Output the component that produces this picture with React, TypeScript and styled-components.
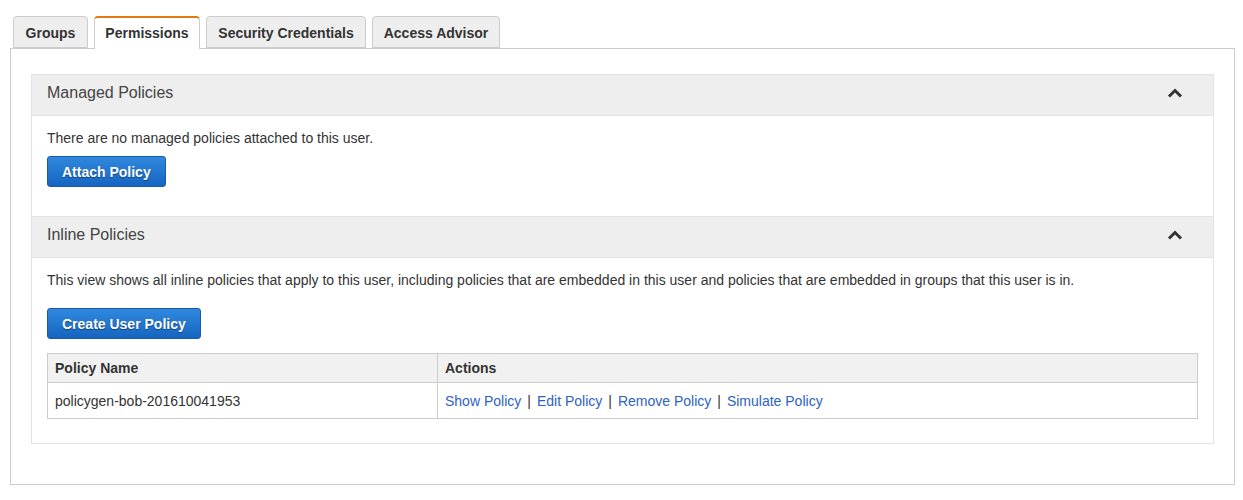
import React from "react";
import styled, { createGlobalStyle } from "styled-components";

const Global = createGlobalStyle`
  html, body { margin: 0; padding: 0; background: #fff; }
  body { font-family: "Liberation Sans", Arial, Helvetica, sans-serif; color: #333; font-size: 14px; }
`;

const Page = styled.div`
  padding: 16px 9px 0 10px;
  width: 1225px;
`;

const TabBar = styled.div`
  display: flex;
  gap: 6px;
  padding-left: 3px;
  position: relative;
  z-index: 1;
`;

const Tab = styled.div<{ $active?: boolean; $w: number }>`
  box-sizing: border-box;
  width: ${(p) => p.$w}px;
  height: ${(p) => (p.$active ? "33px" : "32px")};
  margin-bottom: ${(p) => (p.$active ? "-1px" : "0")};
  display: flex;
  align-items: center;
  justify-content: center;
  font-weight: bold;
  font-size: 14px;
  color: #333;
  background: ${(p) => (p.$active ? "#fff" : "#eeeeee")};
  border: 1px solid #cccccc;
  border-bottom: ${(p) => (p.$active ? "none" : "1px solid #cccccc")};
  border-top: ${(p) => (p.$active ? "2px solid #e47911" : "1px solid #cccccc")};
  border-radius: 4px 4px 0 0;
  padding-top: 1px;
  padding-bottom: ${(p) => (p.$active ? "3px" : "0")};
`;

const Panel = styled.div`
  box-sizing: border-box;
  border: 1px solid #cccccc;
  padding: 25px 20px 40px 20px;
  height: 437px;
`;

const Box = styled.div`
  border: 1px solid #e3e3e3;
`;

const SectionHeader = styled.div<{ $first?: boolean }>`
  box-sizing: border-box;
  height: ${(p) => (p.$first ? "41px" : "42px")};
  background: #eeeeee;
  border-bottom: 1px solid #e3e3e3;
  border-top: ${(p) => (p.$first ? "none" : "1px solid #e3e3e3")};
  display: flex;
  align-items: center;
  justify-content: space-between;
  padding: 0 30px 4px 15px;
  font-size: 16px;
  color: #444;
`;

const SectionBody = styled.div<{ $top: number; $bottom: number }>`
  padding: ${(p) => p.$top}px 15px ${(p) => p.$bottom}px 15px;
`;

const Text = styled.p`
  margin: 0;
  line-height: 20px;
  font-size: 14px;
  color: #333;
`;

const Button = styled.button<{ $top: number }>`
  box-sizing: border-box;
  margin-top: ${(p) => p.$top}px;
  height: 31px;
  padding: 0 14px;
  border: 1px solid #1a5aa8;
  border-radius: 3px;
  background: linear-gradient(#3089de, #1565c0);
  color: #fff;
  font-family: "Liberation Sans", Arial, sans-serif;
  font-weight: bold;
  font-size: 14px;
  text-shadow: 0 1px 1px rgba(0, 0, 0, 0.45);
  display: block;
  cursor: pointer;
`;

const Table = styled.table`
  margin-top: 14px;
  width: 100%;
  border-collapse: collapse;
  border: 1px solid #cccccc;
`;

const Th = styled.th<{ $w?: number }>`
  text-align: left;
  height: 29px;
  padding: 0 7px;
  background: #f1f1f1;
  border: 1px solid #cccccc;
  font-size: 14px;
  color: #333;
  width: ${(p) => (p.$w ? `${p.$w}px` : "auto")};
  box-sizing: border-box;
`;

const Td = styled.td`
  height: 35px;
  padding: 0 7px;
  border: 1px solid #cccccc;
  font-size: 14px;
  color: #333;
`;

const ActionLink = styled.a`
  color: #2d63c0;
  text-decoration: none;
  cursor: pointer;
`;

const Sep = styled.span`
  color: #333;
  margin: 0 6px;
`;

const Chevron = () => (
  <svg width="16" height="12" viewBox="0 0 16 12">
    <path d="M2 9.5 L8 3.5 L14 9.5" fill="none" stroke="#333" strokeWidth="3" strokeLinejoin="miter" />
  </svg>
);

export default function App() {
  const actions = ["Show Policy", "Edit Policy", "Remove Policy", "Simulate Policy"];
  return (
    <>
      <Global />
      <Page>
        <TabBar>
          <Tab $w={75}>Groups</Tab>
          <Tab $w={106} $active>Permissions</Tab>
          <Tab $w={160}>Security Credentials</Tab>
          <Tab $w={128}>Access Advisor</Tab>
        </TabBar>
        <Panel>
          <Box>
            <SectionHeader $first>
              <span>Managed Policies</span>
              <Chevron />
            </SectionHeader>
            <SectionBody $top={12} $bottom={29}>
              <Text>There are no managed policies attached to this user.</Text>
              <Button $top={8}>Attach Policy</Button>
            </SectionBody>
            <SectionHeader>
              <span>Inline Policies</span>
              <Chevron />
            </SectionHeader>
            <SectionBody $top={12} $bottom={24}>
              <Text>
                This view shows all inline policies that apply to this user, including policies that are embedded in this user and policies that are embedded in groups that this user is in.
              </Text>
              <Button $top={18}>Create User Policy</Button>
              <Table>
                <thead>
                  <tr>
                    <Th $w={390}>Policy Name</Th>
                    <Th>Actions</Th>
                  </tr>
                </thead>
                <tbody>
                  <tr>
                    <Td>policygen-bob-201610041953</Td>
                    <Td>
                      {actions.map((a, i) => (
                        <React.Fragment key={a}>
                          {i > 0 && <Sep>|</Sep>}
                          <ActionLink>{a}</ActionLink>
                        </React.Fragment>
                      ))}
                    </Td>
                  </tr>
                </tbody>
              </Table>
            </SectionBody>
          </Box>
        </Panel>
      </Page>
    </>
  );
}
